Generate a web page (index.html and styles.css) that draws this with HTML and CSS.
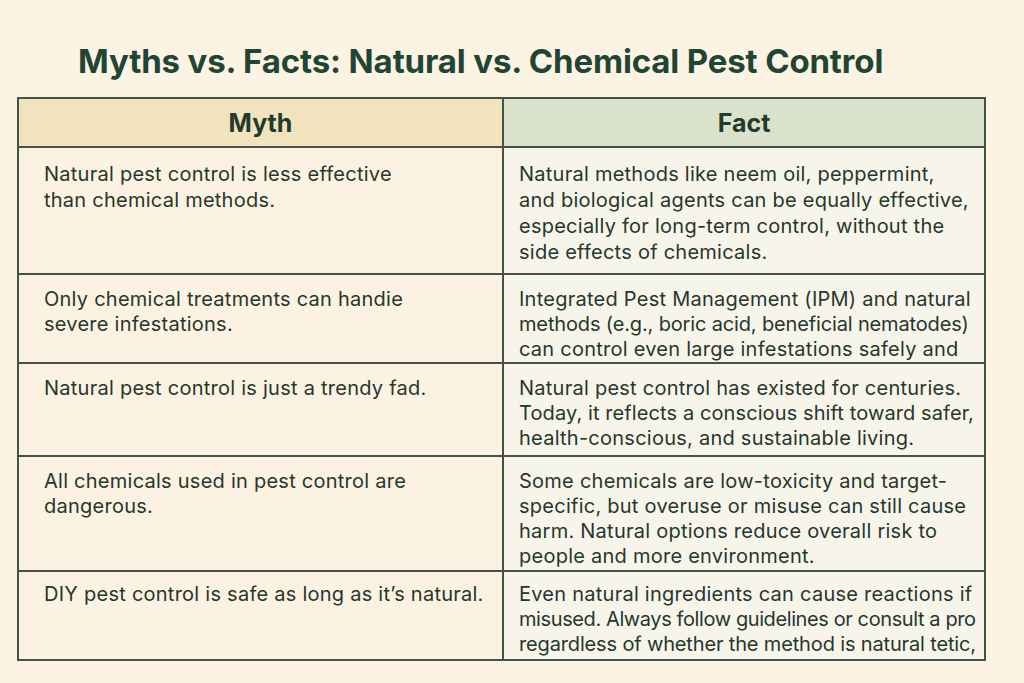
FILE: index.html
```html
<!DOCTYPE html>
<html lang="en">
<head>
<meta charset="utf-8">
<title>Myths vs. Facts</title>
<link rel="stylesheet" href="styles.css">
</head>
<body>
<main class="page">
  <h1 class="title">Myths vs. Facts: Natural vs. Chemical Pest Control</h1>
  <div class="table">
    <div class="head myth-head">Myth</div>
    <div class="head fact-head">Fact</div>

    <div class="cell myth r1">Natural pest control is less effective<br>than chemical methods.</div>
    <div class="cell fact r1">Natural methods like neem oil, peppermint,<br>and biological agents can be equally effective,<br>especially for long-term control, without the<br>side effects of chemicals.</div>

    <div class="cell myth r2">Only chemical treatments can handie<br>severe infestations.</div>
    <div class="cell fact r2">Integrated Pest Management (IPM) and natural<br><span class="tight">methods (e.g., boric acid, beneficial nematodes)</span><br>can control even large infestations safely and</div>

    <div class="cell myth r3">Natural pest control is just a trendy fad.</div>
    <div class="cell fact r3">Natural pest control has existed for centuries.<br><span class="snug">Today, it reflects a conscious shift toward safer,</span><br>health-conscious, and sustainable living.</div>

    <div class="cell myth r4">All chemicals used in pest control are<br>dangerous.</div>
    <div class="cell fact r4">Some chemicals are low-toxicity and target-<br>specific, but overuse or misuse can still cause<br>harm. Natural options reduce overall risk to<br>people and more environment.</div>

    <div class="cell myth r5">DIY pest control is safe as long as it’s natural.</div>
    <div class="cell fact r5">Even natural ingredients can cause reactions if<br><span class="tighter">misused. Always follow guidelines or consult a pro</span><br><span class="tight">regardless of whether the method is natural tetic,</span></div>
  </div>
</main>
</body>
</html>
```

FILE: styles.css
```css
html, body {
  margin: 0;
  padding: 0;
  background: #fcf3e3;
}

body {
  font-family: Inter, "Noto Sans", sans-serif;
  color: #26372e;
}

.page {
  padding: 41px 0 0 17px;
}

.title {
  margin: 0 0 16px 61px;
  font-size: 33px;
  line-height: 40px;
  font-weight: 700;
  color: #1f4634;
  letter-spacing: -0.15px;
}

.table {
  width: 969px;
  display: grid;
  grid-template-columns: 485px 1fr;
  border: 2px solid #44524a;
  box-sizing: border-box;
}

.head {
  height: 47px;
  display: flex;
  align-items: center;
  justify-content: center;
  font-size: 25px;
  font-weight: 700;
  color: #233a2e;
  border-bottom: 2px solid #44524a;
}

.myth-head {
  background: #f1e3bc;
  border-right: 2px solid #44524a;
}

.fact-head {
  background: #dbe2cc;
}

.cell {
  box-sizing: border-box;
  font-size: 20px;
  line-height: 25px;
  letter-spacing: 0.25px;
  white-space: nowrap;
  overflow: hidden;
  border-bottom: 2px solid #44524a;
}

.myth {
  background: #fcf2e2;
  padding: 12px 4px 0 25px;
  border-right: 2px solid #44524a;
}

.fact {
  background: #f7f5ea;
  padding: 12px 2px 0 15px;
}

.snug { letter-spacing: 0.1px; }
.tight { letter-spacing: -0.15px; }
.tighter { letter-spacing: -0.4px; }

.r1 { height: 127px; padding-top: 13px; line-height: 26px; }
.r2 { height: 89px; }
.r3 { height: 93px; }
.r4 { height: 115px; }
.r5 { height: 87px; border-bottom: none; padding-top: 10px; }
```
